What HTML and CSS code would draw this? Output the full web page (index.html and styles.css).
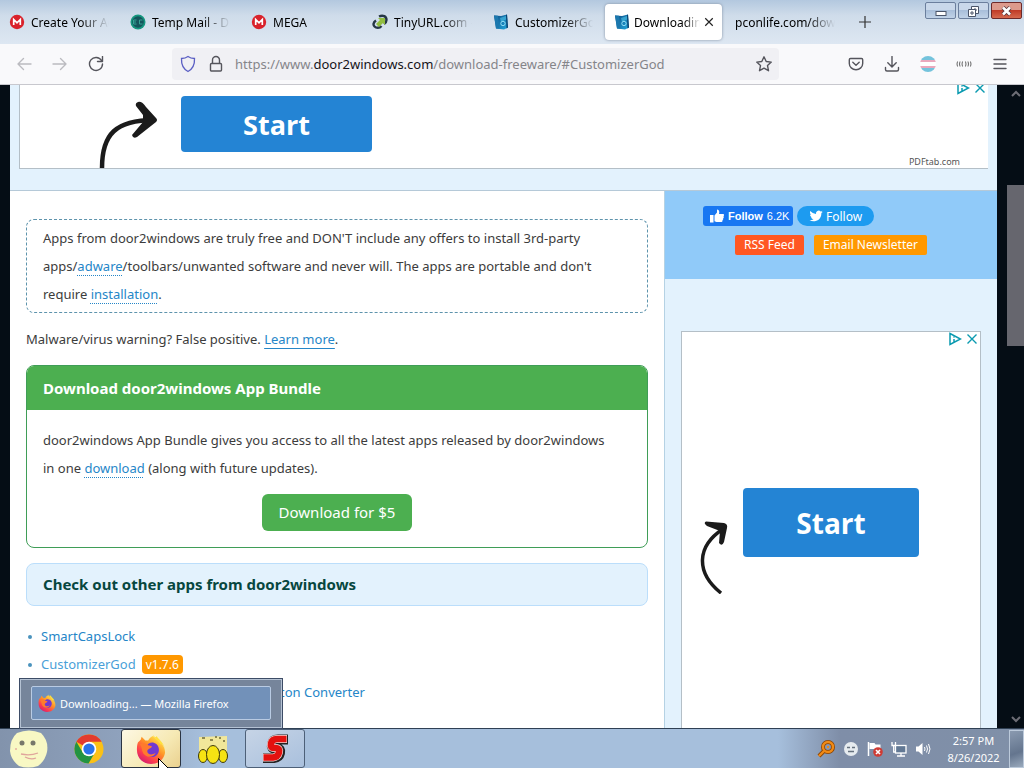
FILE: index.html
```
<!DOCTYPE html>
<html lang="en">
<head>
<meta charset="utf-8">
<title>Downloading... — Mozilla Firefox</title>
<link rel="stylesheet" href="styles.css">
</head>
<body>
<svg class="defs" aria-hidden="true">
  <defs>
    <linearGradient id="ffBody" x1="0.8" y1="0.1" x2="0.2" y2="0.9">
      <stop offset="0" stop-color="#ffe14a"/><stop offset="0.4" stop-color="#ff9026"/><stop offset="0.75" stop-color="#ff3f4c"/><stop offset="1" stop-color="#d8226e"/>
    </linearGradient>
    <linearGradient id="d2w" x1="0" y1="0" x2="1" y2="1">
      <stop offset="0" stop-color="#0b4a84"/><stop offset="1" stop-color="#22a8dd"/>
    </linearGradient>
    <symbol id="firefox" viewBox="0 0 32 32">
      <path d="M2 9 5 6l1-3 4 4h3c1-3 3-4 5-5 2 3 5 3 7 6 3 3 6 6 6 12-1 7-7 12-15 12C8 32 1 26 1 17c0-3 0-5 1-8z" fill="url(#ffBody)"/>
      <path d="M18 1c1 4 6 5 8 10 3-1 4 2 5 6-1-8-6-10-9-15-1 2-1 2-4-1z" fill="#ffdf3d"/>
      <path d="M12 12c2-3 6-4 10-1 4 4 3 11-2 13-5 2-10-1-11-6l4-3z" fill="#7139d0"/>
      <path d="M4 11c3-2 7-1 9 1l4 1c-1 3-4 2-5 5 0 4 5 5 9 2-2 5-9 6-13 1-2-3-1-6-4-10z" fill="#ff7a2d"/>
    </symbol>
    <symbol id="mega" viewBox="0 0 16 16">
      <circle cx="8" cy="8" r="7.200" fill="#d9222b"/><path d="M4.700 11V5.500L8 8.800l3.300-3.300V11" fill="none" stroke="#fff" stroke-width="1.700"/>
    </symbol>
    <symbol id="door" viewBox="0 0 16 16">
      <path d="M1 1.500 8 2l6-1.500 1 13-4 2-8-1z" fill="url(#d2w)"/><path d="M1 1.500l4 .3 1.500 13L3 14.500z" fill="#1b78ae"/><path d="M7 4l6-2 1 3-6 3z" fill="#4cc3e8" opacity=".6"/><circle cx="10" cy="9.500" r="2.200" fill="none" stroke="#8fdcf5"/><path d="M14 .5l1 13-1.500 1L13 1z" fill="#0c3f6c"/>
    </symbol>
    <symbol id="adchoice" viewBox="0 0 14 14">
      <path d="M2 1.500 12.500 7 2 12.500zM6 7v3" fill="none" stroke="currentColor" stroke-width="1.500"/><circle cx="6" cy="5" r=".8" fill="currentColor"/>
    </symbol>
    <symbol id="cross" viewBox="0 0 12 12"><path d="M1.500 1.500l9 9M10.500 1.500l-9 9" fill="none" stroke="currentColor" stroke-width="1.400"/></symbol>
  </defs>
</svg>

<header class="tabbar">
  <div class="tabs" role="tablist">
    <button class="tab" role="tab"><svg class="ico16"><use href="#mega"/></svg><span class="tab-title">Create Your Account</span></button>
    <button class="tab" role="tab"><svg class="ico16" viewBox="0 0 16 16"><circle cx="8" cy="8" r="7.500" fill="#15977f"/><circle cx="8" cy="8" r="5.800" fill="#14565c"/><path d="M6.500 6H3.500v4h3M3.500 8h2.500M12.500 6h-3v4h3" stroke="#35a394" fill="none"/></svg><span class="tab-title">Temp Mail - Disposable</span></button>
    <button class="tab" role="tab"><svg class="ico16"><use href="#mega"/></svg><span class="tab-title">MEGA</span></button>
    <button class="tab" role="tab"><svg class="ico16" viewBox="0 0 16 16"><path d="M7 2.500c4-2 7.500 0 7.500 3.500 0 2-1 3-2.500 4M4 6.500c-3 2-3 4.500-1.500 6s5 2 7-.5" fill="none" stroke="#263746" stroke-width="2.400"/><path d="M6 4h7v7l-2-2-4 4-3-3 4-4z" fill="#91bd3f"/></svg><span class="tab-title">TinyURL.com - shorten</span></button>
    <button class="tab" role="tab"><svg class="ico16"><use href="#door"/></svg><span class="tab-title">CustomizerGod</span></button>
    <div class="tab tab-active" role="tab" aria-selected="true"><svg class="ico16"><use href="#door"/></svg><span class="tab-title">Downloading...</span><button class="tab-close" aria-label="Close tab"><svg class="ico10"><use href="#cross"/></svg></button></div>
    <button class="tab" role="tab"><span class="tab-title">pconlife.com/download</span></button>
    <button class="newtab" aria-label="New tab"><svg viewBox="0 0 12 12" class="ico12"><path d="M6 0v12M0 6h12" stroke="#333" stroke-width="1.200"/></svg></button>
  </div>
  <div class="winbtns">
    <button class="win" aria-label="Minimize"><svg viewBox="0 0 29 16"><rect x="10" y="8.500" width="10" height="4" fill="#fff" stroke="#4a5569"/></svg></button>
    <button class="win" aria-label="Restore"><svg viewBox="0 0 29 16"><path d="M12.500 3.500h7v7h-7zM15 6h2v2h-2z" fill="#fff" stroke="#4a5569"/><path d="M9.500 6.500h7v7h-7zM12 9h2v2h-2z" fill="#fff" stroke="#4a5569"/></svg></button>
    <button class="win win-close" aria-label="Close"><svg viewBox="0 0 29 16"><path d="M11 4.500l7 7M18 4.500l-7 7" stroke="#53343a" stroke-width="4.200"/><path d="M11 4.500l7 7M18 4.500l-7 7" stroke="#fff" stroke-width="2.600"/></svg></button>
  </div>
</header>

<nav class="toolbar">
  <div class="nav">
    <button aria-label="Back"><svg class="ico16" viewBox="0 0 16 16"><path d="M15 8H2M7.500 2.500 2 8l5.500 5.500" class="ln faint"/></svg></button>
    <button aria-label="Forward"><svg class="ico16" viewBox="0 0 16 16"><path d="M1 8h13M8.500 2.500 14 8l-5.500 5.500" class="ln faint"/></svg></button>
    <button aria-label="Reload"><svg class="ico16" viewBox="0 0 16 16"><path d="M13.500 4.500A6.500 6.500 0 1 0 14.500 8M9.500 5.500h5V.5" class="ln"/></svg></button>
  </div>
  <div class="urlbar">
    <svg class="ico18" viewBox="0 0 18 18"><path d="M9 1.500c2 1.500 4 2 6.500 2 .3 6-1 10-6.500 13-5.500-3-6.800-7-6.500-13 2.500 0 4.500-.5 6.500-2z" fill="none" stroke="#5b5fc4" stroke-width="1.300"/></svg>
    <svg class="ico18" viewBox="0 0 18 18"><rect x="3.500" y="8.500" width="11" height="7.500" rx="1" class="ln"/><path d="M5.500 8V5a3.500 3.500 0 0 1 7 0v3" class="ln"/></svg>
    <span class="url">https://www.<b>door2windows.com</b>/download-freeware/#CustomizerGod</span>
    <button class="star" aria-label="Bookmark"><svg class="ico18" viewBox="0 0 18 18"><path d="M9 1.800l2.200 4.700 5.100.6-3.800 3.500 1 5.100L9 13.200l-4.500 2.500 1-5.100L1.700 7.100l5.100-.6z" class="ln"/></svg></button>
  </div>
  <div class="actions">
    <button aria-label="Pocket"><svg class="ico16" viewBox="0 0 16 16"><path d="M2.500 2.500h11q1.200 0 1.200 1.200V7.500a6.700 6.200 0 0 1-13.400 0V3.700q0-1.200 1.200-1.200zM4.800 6.300 8 9.300l3.200-3" class="ln"/></svg></button>
    <button aria-label="Downloads"><svg class="ico16" viewBox="0 0 16 16"><path d="M8 .5v10M3.800 6.800 8 11l4.200-4.200M1.500 11.500v2q0 1.500 1.500 1.500h10q1.500 0 1.500-1.500v-2" class="ln"/></svg></button>
    <button aria-label="Account"><span class="avatar"></span></button>
    <button aria-label="Extension"><svg class="ico16" viewBox="0 0 16 16"><path d="M1.500 5.500q-1 2.500 0 5M4 5.500q-1 2.500 0 5M6.500 5.500q-1 2.500 0 5M9.500 5.500q1 2.500 0 5M12 5.500q1 2.500 0 5M14.500 5.500q1 2.500 0 5" fill="none" stroke="#666"/></svg></button>
    <button aria-label="Menu"><svg class="ico16" viewBox="0 0 16 16"><path d="M2 3.500h12M2 8h12M2 12.500h12" class="ln"/></svg></button>
  </div>
</nav>

<main class="viewport">
  <div class="page">
    <section class="topad">
      <div class="topad-box">
        <svg class="arrow-top" viewBox="0 0 64 70"><path d="M4 70C4 36 18 22 56 22" fill="none" stroke="#1b1b1b" stroke-width="4.500"/><path d="M40 4q4-1 8 5l10 11q2 2 0 4L39 39q-4 2-5-2l11-13v-7L38 8q-1-3 2-4z" fill="#1b1b1b"/></svg>
        <button class="start start-top">Start</button>
        <div class="topad-side">
          <span class="adicons"><svg class="ico14"><use href="#adchoice"/></svg><svg class="ico12"><use href="#cross"/></svg></span>
          <span class="advertiser">PDFtab.com</span>
        </div>
      </div>
    </section>
    <div class="columns">
      <article class="content">
        <p class="notice">Apps from door2windows are truly free and DON'T include any offers to install 3rd-party apps/<a href="#" class="dot">adware</a>/toolbars/unwanted software and never will. The apps are portable and don't require <a href="#" class="dot">installation</a>.</p>
        <p class="warn">Malware/virus warning? False positive. <a href="#" class="solid">Learn more</a>.</p>
        <section class="bundle">
          <h2>Download door2windows App Bundle</h2>
          <div class="bundle-body">
            <p>door2windows App Bundle gives you access to all the latest apps released by door2windows in one <a href="#" class="dot">download</a> (along with future updates).</p>
            <button class="buy">Download for $5</button>
          </div>
        </section>
        <h2 class="others">Check out other apps from door2windows</h2>
        <ul class="apps">
          <li><a href="#">SmartCapsLock</a></li>
          <li><a href="#" class="pale">CustomizerGod</a><span class="ver">v1.7.6</span></li>
          <li><a href="#">Windows 7 to Windows 8 Start Button Icon Converter</a></li>
        </ul>
      </article>
      <aside class="side">
        <div class="social">
          <div class="row row-1">
            <button class="fb"><svg class="ico14" viewBox="0 0 14 14"><path d="M0 6h3.500v7.500H0zM4.500 6.500 7 3.500V.5c2 0 2.700 1.500 2 4.500h4c1.300 0 1.200 1.800.5 2.300.5.700.3 1.600-.4 2 .3.800 0 1.400-.6 1.700.2 1.300-.5 2-1.500 2H6.500l-2-.8z" fill="#fff"/></svg><b>Follow</b> 6.2K</button>
            <button class="tw"><svg class="ico14" viewBox="0 0 24 24"><path d="M23.600 4.900c-.8.400-1.700.6-2.700.8 1-.6 1.700-1.500 2-2.600-.9.500-1.900.9-3 1.100A4.700 4.700 0 0 0 12 8.500C8 8.300 4.600 6.400 2.300 3.600c-1.300 2.200-.6 4.900 1.500 6.300-.8 0-1.500-.2-2.100-.6 0 2.300 1.600 4.200 3.800 4.700-.7.200-1.400.2-2.100.1.600 1.900 2.300 3.200 4.400 3.300A9.500 9.500 0 0 1 .8 19.300c7 4.400 20.600 1.300 20.400-12 1-.6 1.800-1.500 2.400-2.400z" fill="#fff"/></svg>Follow</button>
          </div>
          <div class="row row-2"><a href="#" class="pill rss">RSS Feed</a><a href="#" class="pill mail">Email Newsletter</a></div>
        </div>
        <div class="sidead">
          <span class="adicons"><svg class="ico14"><use href="#adchoice"/></svg><svg class="ico12"><use href="#cross"/></svg></span>
          <div class="sidead-cta">
            <svg class="arrow-side" viewBox="0 0 34 76"><path d="M24 75C-2 54 0 28 26 11" fill="none" stroke="#1b1b1b" stroke-width="3.500"/><path d="M9 3.500 27 5q4 1 3 5l-3 14q-2 5-5 1l1-12L10 8q-4-3-1-4.500z" fill="#1b1b1b"/></svg>
            <button class="start start-side">Start</button>
          </div>
        </div>
      </aside>
    </div>
  </div>
  <div class="scroll">
    <svg class="ico10" viewBox="0 0 10 10"><path d="M1 7l4-4 4 4" fill="none" stroke="#6d6d75" stroke-width="2"/></svg>
    <span class="thumb"></span>
    <svg class="ico10" viewBox="0 0 10 10"><path d="M1 3l4 4 4-4" fill="none" stroke="#6d6d75" stroke-width="2"/></svg>
  </div>
</main>

<footer class="taskbar">
  <div class="preview"><div class="preview-item"><svg class="ico18"><use href="#firefox"/></svg>Downloading... — Mozilla Firefox</div></div>
  <button class="task orb" aria-label="Start menu"><svg viewBox="0 0 40 38"><path d="M8 3q12-5 24 0 8 8 6 19-2 9-9 14-10 3-19 0-8-6-9-15Q1 9 8 3z" fill="#f8f8c4"/><circle cx="13" cy="13" r="2.500" fill="#77776a"/><circle cx="24" cy="13" r="2.500" fill="#77776a"/><path d="M12 24q9 2 17-1M16 27q6 3 11 1M7 18v2" fill="none" stroke="#e0a59c" stroke-width="1.300"/></svg></button>
  <button class="task" aria-label="Chrome"><svg class="ico30" viewBox="0 0 30 30"><circle cx="15" cy="15" r="14.500" fill="#fbc116"/><path d="M15 15 2.400 7.700A14.500 14.500 0 0 1 27.600 7.700H15z" fill="#e33b2e"/><path d="M2.400 7.700A14.500 14.500 0 0 0 14.500 29.500L21 18.500 8.700 18.500z" fill="#229342"/><circle cx="15" cy="15" r="7.300" fill="#fff"/><circle cx="15" cy="15" r="5.600" fill="#2a73e8"/></svg></button>
  <button class="task task-hot" aria-label="Firefox"><svg class="ico30"><use href="#firefox"/></svg></button>
  <button class="task" aria-label="Explorer"><svg class="ico30" viewBox="0 0 30 30"><path d="M1 3l28-1v20H1z" fill="#f1e79a"/><path d="M4 4h3M12 6h3M21 4h2M17 3h2M25 7h2" stroke="#6d6a3a" stroke-width="1.500"/><g fill="#f6e313" stroke="#3c3808"><ellipse cx="5" cy="22" rx="4.500" ry="6.500"/><ellipse cx="25" cy="22" rx="4.500" ry="6.500"/><ellipse cx="15" cy="20.500" rx="6.500" ry="9"/></g></svg></button>
  <button class="task task-open" aria-label="S"><svg class="ico32" viewBox="0 0 32 32"><g fill="none"><path d="M29 6.500H19q-5 0-6 4.500t3 4.500h2q4 0 3 4.500t-6 5H4" stroke="#222" stroke-width="10"/><path d="M28 6H18q-5 0-6 4.500t3 4.500h2q4 0 3 4.500t-6 5H4" stroke="#f3d6d6" stroke-width="8"/><path d="M27.500 6H18q-5 0-6 4.500t3 4.500h2q4 0 3 4.500t-6 5H4.500" stroke="#e3110f" stroke-width="6.500"/></g></svg></button>
  <div class="tray">
    <svg class="ico18" viewBox="0 0 18 18"><circle cx="11" cy="7" r="5" fill="none" stroke="#8a4300" stroke-width="4"/><path d="M7 11l-5 5" stroke="#8a4300" stroke-width="4"/><circle cx="11" cy="7" r="5" fill="none" stroke="#f08a16" stroke-width="2.400"/><path d="M7 11l-5 5" stroke="#f08a16" stroke-width="2.400"/><circle cx="11" cy="7" r="1.200" fill="#f08a16"/></svg>
    <svg class="ico16" viewBox="0 0 16 16"><circle cx="8" cy="8" r="7" fill="#e6ebef"/><path d="M4 6.500h3M9 6.500h3M5 10.500h6" stroke="#66717e" stroke-width="1.300"/></svg>
    <svg class="ico16" viewBox="0 0 16 16"><path d="M1.500 1v14" stroke="#fff" stroke-width="1.500"/><path d="M2.500 2h5l1 1.500h5V9H8L7 8H2.500z" fill="#fff"/><circle cx="11" cy="11" r="4.800" fill="#cf3b34"/><path d="M9 9l4 4M13 9l-4 4" stroke="#fff" stroke-width="1.600"/></svg>
    <svg class="ico16" viewBox="0 0 16 16"><rect x="4.500" y="4.500" width="10.500" height="7.500" fill="#627894" stroke="#fff" stroke-width="1.300"/><path d="M6 15h8M10 12v3M1 1v3.500h3.500V1M2.700 4.500V11H4" fill="none" stroke="#fff" stroke-width="1.300"/></svg>
    <svg class="ico16" viewBox="0 0 16 16"><path d="M1 5.500h2.500L7.500 2v12L3.500 10.500H1z" fill="#fff"/><path d="M9.500 6q1 2 0 4M11.500 4.500q2 3.500 0 7M13.500 3q3 5 0 10" fill="none" stroke="#fff"/></svg>
  </div>
  <time class="clock"><span>2:57 PM</span><span>8/26/2022</span></time>
  <button class="desk" aria-label="Show desktop"></button>
  <svg class="cursor" viewBox="0 0 12 19"><path d="M.5.5v16l4-3.500 2.500 5.500 2.500-1L7 12h5z" fill="#fff" stroke="#000"/></svg>
</footer>
</body>
</html>
```
FILE: styles.css
```
* { box-sizing: border-box; }
html, body { height: 100%; }
body { margin: 0; display: flex; flex-direction: column; overflow: hidden; font-family: "Noto Sans", "Open Sans", sans-serif; font-size: 12px; color: #000; }
button { font: inherit; color: inherit; border: 0; padding: 0; background: none; }
a { color: #2586c8; text-decoration: none; }
p, h2, ul { margin: 0; }
svg { display: block; flex: none; }
.defs { position: absolute; width: 0; height: 0; }
.ico10 { width: 10px; height: 10px; }
.ico12 { width: 12px; height: 12px; }
.ico14 { width: 14px; height: 14px; }
.ico16 { width: 16px; height: 16px; }
.ico18 { width: 18px; height: 18px; }
.ico30 { width: 30px; height: 30px; }
.ico32 { width: 32px; height: 32px; }
.ln { fill: none; stroke: #55555c; stroke-width: 1.4; stroke-linejoin: round; stroke-linecap: round; }
.faint { stroke: #bbbbc0; }

.tabbar { flex: none; display: flex; justify-content: space-between; align-items: flex-start; height: 44px; background: linear-gradient(#b3c8df, #cfdcea 35%, #dde7f2); }
.tabs { display: flex; gap: 4px; padding-top: 4px; }
.tab { display: flex; align-items: center; gap: 6px; width: 117px; height: 36px; padding: 0 8px 0 9px; border-radius: 4px; text-align: left; }
.tab-title { flex: 1; overflow: hidden; white-space: nowrap; mask-image: linear-gradient(90deg, #000 calc(100% - 28px), transparent); }
.tab-active { gap: 4px; background: #fff; box-shadow: 0 0 3px #7f8da0; }
.tab-active .tab-title { mask-image: linear-gradient(90deg, #000 calc(100% - 16px), transparent); }
.tab-close { color: #222; }
.newtab { width: 36px; display: flex; align-items: center; justify-content: center; }
.winbtns { display: flex; gap: 2px; padding: 2px 2px 0 0; }
.win { width: 31px; height: 17px; border: 1px solid #6b7f9d; border-radius: 2px; background: linear-gradient(#c9d8ea 50%, #a9bfda 50%, #c0d2e7); }
.win-close { border-color: #6d2a2a; background: linear-gradient(#dc9a8c 50%, #c03c28 50%, #d6694e); }

.toolbar { flex: none; display: flex; align-items: center; height: 41px; padding: 0 16px; background: #f9f9fb; border-bottom: 1px solid #c8c8ce; }
.nav { display: flex; gap: 20px; width: 156px; }
.urlbar { flex: 1; display: flex; align-items: center; gap: 10px; height: 32px; padding: 0 6px 0 7px; border-radius: 4px; background: #f0f0f4; }
.url { flex: 1; font-size: 13px; color: #85858a; white-space: nowrap; overflow: hidden; }
.url b { font-weight: 400; color: #15141a; }
.actions { display: flex; gap: 20px; padding-left: 69px; }
.avatar { display: block; width: 16px; height: 16px; border-radius: 50%; background: linear-gradient(#74c3dc 22%, #eaa8bd 22% 40%, #fff 40% 60%, #eaa8bd 60% 78%, #74c3dc 78%); }

.viewport { flex: 1; min-height: 0; display: flex; overflow: hidden; background: #050d15; }
.page { flex: 1; margin: 0 10px; display: flex; flex-direction: column; min-width: 0; background: #e3f2fd; }
.topad { padding: 0 9px 21px; border-bottom: 1px solid #b5c9d8; }
.topad-box { display: flex; height: 84px; padding-left: 78px; background: #fff; border: 1px solid #b4bfc7; border-top: 0; border-right: 0; }
.arrow-top { width: 64px; height: 70px; margin-top: 13px; }
.start { background: #2484d4; color: #fff; font-family: "Open Sans", sans-serif; font-weight: 700; font-size: 28px; border-radius: 4px; }
.start-top { width: 191px; height: 56px; margin: 11px 0 0 19px; font-size: 27px; }
.topad-side { flex: 1; display: flex; flex-direction: column; justify-content: space-between; align-items: flex-end; }
.adicons { display: flex; gap: 4px; align-items: center; justify-content: flex-end; padding: 0 2px; color: #0a9ab0; }
.topad-side .adicons { margin-top: -4px; }
.advertiser { font-size: 9px; line-height: 13px; color: #555; padding-right: 28px; }

.columns { flex: 1; min-height: 0; display: flex; }
.content { flex: 1; min-width: 0; padding: 28px 16px 0; background: #fff; border-right: 1px solid #b5d2e4; font-size: 13px; line-height: 28px; color: #3c3c3c; }
.notice { padding: 4px 16px; border: 1px dashed #5d93ac; border-radius: 8px; }
.dot { text-decoration: underline dotted 1px; text-underline-offset: 4px; }
.solid { text-decoration: underline 1px; text-underline-offset: 4px; }
.warn { margin: 12px 0; }
.bundle { border: 1px solid #3f9d57; border-radius: 8px; overflow: hidden; }
.bundle h2 { padding: 8px 16px; background: #4caf50; color: #fff; font-size: 15px; line-height: 28px; }
.bundle-body { padding: 16px; }
.bundle-body p { padding-right: 16px; }
.buy { display: block; margin: 12px auto 0; width: 150px; height: 37px; border-radius: 6px; background: #4caf50; color: #fff; font-size: 15px; line-height: 35px; }
.others { margin: 15px 0 16px; padding: 6px 16px; border: 1px solid #bbdefb; border-radius: 8px; background: #e3f2fd; color: #07473f; font-size: 15px; line-height: 29px; }
.apps { padding: 0; list-style: none; }
.apps li { display: flex; align-items: center; white-space: nowrap; }
.apps li::before { content: ""; flex: none; width: 4px; height: 4px; margin: 2px 9px 0 2px; border-radius: 50%; background: #4a93bd; }
.pale { color: #4a9fd8; }
.ver { margin-left: 6px; padding: 0 4px; border-radius: 4px; background: #ff9800; color: #fff; font-size: 12px; line-height: 19px; }

.side { flex: none; width: 332px; }
.social { height: 88px; padding: 15px 38px; background: #90caf9; color: #fff; }
.row { display: flex; align-items: center; }
.row-1 { gap: 4px; }
.row-2 { gap: 10px; justify-content: center; margin-top: 9px; }
.fb, .tw { display: flex; align-items: center; gap: 4px; height: 20px; white-space: nowrap; }
.fb { width: 90px; padding-left: 7px; border-radius: 3px; background: #1877f2; font-family: "Liberation Sans", sans-serif; font-size: 11px; }
.tw { width: 77px; padding-left: 12px; gap: 3px; border-radius: 10px; background: #1d9bf0; }
.pill { height: 20px; padding: 0 9px; border-radius: 2px; color: #fff; font-size: 12px; line-height: 20px; }
.rss { background: #ff5722; }
.mail { background: #ff9800; }
.sidead { width: 300px; height: 600px; margin: 52px 0 0 16px; background: #fff; border: 1px solid #b4bfc7; }
.sidead-cta { display: flex; gap: 12px; margin-top: 142px; padding-left: 15px; }
.arrow-side { width: 34px; height: 76px; margin-top: 30px; }
.start-side { width: 176px; height: 69px; }

.scroll { flex: none; width: 17px; display: flex; flex-direction: column; align-items: center; justify-content: space-between; padding: 4px 0; }
.thumb { width: 17px; height: 161px; margin-bottom: 282px; background: #66666e; }

.taskbar { position: relative; flex: none; display: flex; align-items: center; height: 40px; border-top: 1px solid #2f4054; background: linear-gradient(90deg, #8293ac, #8fa2bd 12%, #a6bfdc 20%, #a6bfdc 76%, #7f8ea8 82%, #8090a8); }
.preview { position: absolute; left: 19px; bottom: 39px; width: 264px; height: 51px; padding: 7px 11px; border: 1px solid #3d4c66; background: #76859b; box-shadow: inset 0 0 0 1px #b5c2d3; }
.preview-item { display: flex; align-items: center; gap: 4px; height: 34px; padding-left: 6px; border: 1px solid #b9cbe3; border-radius: 2px; background: #7291b9; color: #fff; font-size: 11px; white-space: nowrap; }
.task { flex: none; display: flex; align-items: center; justify-content: center; width: 60px; height: 39px; margin-right: 2px; border: 1px solid transparent; border-radius: 3px; }
.orb { width: 57px; }
.orb svg { width: 40px; height: 38px; }
.task-hot { background: linear-gradient(135deg, #fdf8e4, #f6e9b4 60%, #ead18f); border-color: #2b3442; }
.task-open { border-color: #4d6078; background: linear-gradient(150deg, #c6d4e6, #a9c0dd); }
.tray { flex: 1; display: flex; justify-content: flex-end; align-items: center; gap: 8px; }
.clock { display: flex; flex-direction: column; align-items: center; width: 78px; padding-left: 7px; font-size: 11px; line-height: 17px; color: #fff; }
.desk { width: 15px; height: 38px; border: 1px solid #bccadb; background: linear-gradient(160deg, #8a9ab0, #64758e 60%, #9aaabd); }
.cursor { position: absolute; left: 158px; top: 29px; width: 12px; height: 19px; }
```
